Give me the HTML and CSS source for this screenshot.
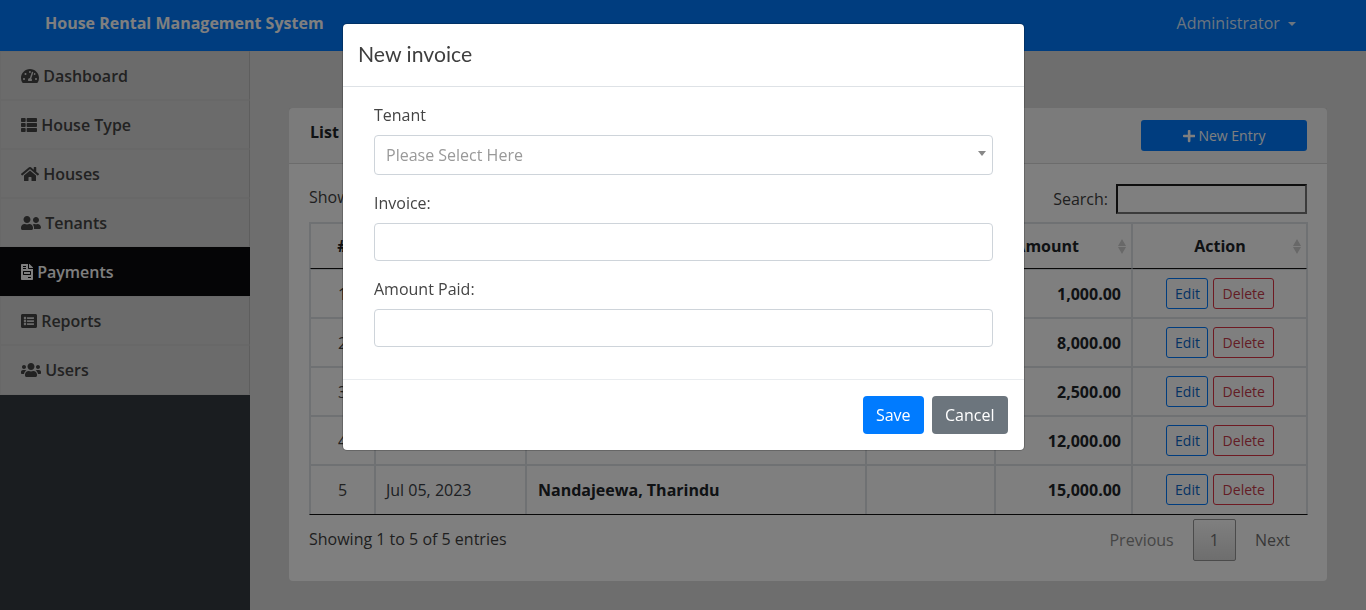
FILE: index.html
```html
<!DOCTYPE html>
<html lang="en">
<head>
<meta charset="utf-8">
<title>House Rental Management System</title>
<link rel="stylesheet" href="styles.css">
</head>
<body>
<div class="app">
  <header class="topbar">
    <span class="brand">House Rental Management System</span>
    <span class="account">Administrator <i class="caret"></i></span>
  </header>
  <div class="shell">
    <nav class="sidebar">
      <a class="nav-item"><svg class="ico" viewBox="0 0 576 512"><path d="M288 32C128.94 32 0 160.94 0 320c0 52.8 14.25 102.26 39.06 144.8 5.61 9.62 16.3 15.2 27.44 15.2h443c11.14 0 21.83-5.58 27.44-15.2C561.75 422.26 576 372.8 576 320c0-159.06-128.94-288-288-288zm0 64c14.71 0 26.58 10.13 30.32 23.65-1.11 2.26-2.64 4.23-3.45 6.67l-9.22 27.67c-5.13 3.49-10.97 6.01-17.64 6.01-17.67 0-32-14.33-32-32S270.33 96 288 96zM96 384c-17.67 0-32-14.33-32-32s14.33-32 32-32 32 14.33 32 32-14.33 32-32 32zm48-160c-17.67 0-32-14.33-32-32s14.33-32 32-32 32 14.33 32 32-14.33 32-32 32zm246.77-72.41l-61.33 184C343.13 347.33 352 364.54 352 384c0 11.72-3.38 22.55-8.88 32H232.88c-5.5-9.45-8.88-20.28-8.88-32 0-33.94 26.5-61.43 59.9-63.59l61.34-184.01c4.17-12.56 17.73-19.45 30.36-15.17 12.57 4.19 19.35 17.79 15.17 30.36zm14.66 57.2l15.52-46.55c3.47-1.29 7.13-2.23 11.05-2.23 17.67 0 32 14.33 32 32s-14.33 32-32 32c-11.38-.01-20.89-6.28-26.57-15.22zM480 384c-17.67 0-32-14.33-32-32s14.33-32 32-32 32 14.33 32 32-14.33 32-32 32z"/></svg> Dashboard</a>
      <a class="nav-item"><svg class="ico" viewBox="0 0 512 512"><path d="M149.333 216v80c0 13.255-10.745 24-24 24H24c-13.255 0-24-10.745-24-24v-80c0-13.255 10.745-24 24-24h101.333c13.255 0 24 10.745 24 24zM0 376v80c0 13.255 10.745 24 24 24h101.333c13.255 0 24-10.745 24-24v-80c0-13.255-10.745-24-24-24H24c-13.255 0-24 10.745-24 24zM125.333 32H24C10.745 32 0 42.745 0 56v80c0 13.255 10.745 24 24 24h101.333c13.255 0 24-10.745 24-24V56c0-13.255-10.745-24-24-24zm80 448H488c13.255 0 24-10.745 24-24v-80c0-13.255-10.745-24-24-24H205.333c-13.255 0-24 10.745-24 24v80c0 13.255 10.745 24 24 24zm-24-424v80c0 13.255 10.745 24 24 24H488c13.255 0 24-10.745 24-24V56c0-13.255-10.745-24-24-24H205.333c-13.255 0-24 10.745-24 24zm24 264H488c13.255 0 24-10.745 24-24v-80c0-13.255-10.745-24-24-24H205.333c-13.255 0-24 10.745-24 24v80c0 13.255 10.745 24 24 24z"/></svg> House Type</a>
      <a class="nav-item"><svg class="ico" viewBox="0 0 576 512"><path d="M280.37 148.26L96 300.11V464a16 16 0 0 0 16 16l112.06-.29a16 16 0 0 0 15.92-16V368a16 16 0 0 1 16-16h64a16 16 0 0 1 16 16v95.64a16 16 0 0 0 16 16.05L464 480a16 16 0 0 0 16-16V300L295.67 148.26a12.19 12.19 0 0 0-15.3 0zM571.6 251.47L488 182.56V44.05a12 12 0 0 0-12-12h-56a12 12 0 0 0-12 12v72.61L318.47 43a48 48 0 0 0-61 0L4.34 251.47a12 12 0 0 0-1.6 16.9l25.5 31A12 12 0 0 0 45.15 301l235.22-193.74a12.19 12.19 0 0 1 15.3 0L530.9 301a12 12 0 0 0 16.9-1.6l25.5-31a12 12 0 0 0-1.7-16.93z"/></svg> Houses</a>
      <a class="nav-item"><svg class="ico" viewBox="0 0 640 512"><path d="M192 256c61.9 0 112-50.1 112-112S253.9 32 192 32 80 82.1 80 144s50.1 112 112 112zm76.8 32h-8.3c-20.8 10-43.9 16-68.5 16s-47.6-6-68.5-16h-8.3C51.6 288 0 339.6 0 403.2V432c0 26.5 21.5 48 48 48h288c26.5 0 48-21.5 48-48v-28.8c0-63.6-51.6-115.2-115.2-115.2zM480 256c53 0 96-43 96-96s-43-96-96-96-96 43-96 96 43 96 96 96zm48 32h-3.8c-13.9 4.8-28.6 8-44.2 8s-30.3-3.2-44.2-8H432c-20.4 0-39.2 5.9-55.7 15.4 24.4 26.3 39.7 61.2 39.7 99.8v38.4c0 2.2-.5 4.3-.6 6.4H592c26.5 0 48-21.5 48-48 0-61.9-50.1-112-112-112z"/></svg> Tenants</a>
      <a class="nav-item active"><svg class="ico" viewBox="0 0 384 512"><path d="M288 256H96v64h192v-64zm89-151L279.1 7c-4.5-4.5-10.6-7-17-7H256v128h128v-6.1c0-6.3-2.5-12.4-7-16.9zm-153 31V0H24C10.7 0 0 10.7 0 24v464c0 13.3 10.7 24 24 24h336c13.3 0 24-10.7 24-24V160H248c-13.2 0-24-10.8-24-24zM64 72c0-4.42 3.58-8 8-8h80c4.42 0 8 3.58 8 8v16c0 4.42-3.58 8-8 8H72c-4.42 0-8-3.58-8-8V72zm0 64c0-4.42 3.58-8 8-8h80c4.42 0 8 3.58 8 8v16c0 4.42-3.58 8-8 8H72c-4.42 0-8-3.58-8-8v-16zm256 304c0 4.42-3.58 8-8 8h-80c-4.42 0-8-3.58-8-8v-16c0-4.42 3.58-8 8-8h80c4.42 0 8 3.58 8 8v16zm0-200v96c0 8.84-7.16 16-16 16H80c-8.84 0-16-7.16-16-16v-96c0-8.84 7.16-16 16-16h224c8.84 0 16 7.16 16 16z"/></svg> Payments</a>
      <a class="nav-item"><svg class="ico" viewBox="0 0 512 512"><path d="M464 480H48c-26.51 0-48-21.49-48-48V80c0-26.51 21.49-48 48-48h416c26.51 0 48 21.49 48 48v352c0 26.51-21.49 48-48 48zM128 120c-22.091 0-40 17.909-40 40s17.909 40 40 40 40-17.909 40-40-17.909-40-40-40zm0 96c-22.091 0-40 17.909-40 40s17.909 40 40 40 40-17.909 40-40-17.909-40-40-40zm0 96c-22.091 0-40 17.909-40 40s17.909 40 40 40 40-17.909 40-40-17.909-40-40-40zm288-136v-32c0-6.627-5.373-12-12-12H204c-6.627 0-12 5.373-12 12v32c0 6.627 5.373 12 12 12h200c6.627 0 12-5.373 12-12zm0 96v-32c0-6.627-5.373-12-12-12H204c-6.627 0-12 5.373-12 12v32c0 6.627 5.373 12 12 12h200c6.627 0 12-5.373 12-12zm0 96v-32c0-6.627-5.373-12-12-12H204c-6.627 0-12 5.373-12 12v32c0 6.627 5.373 12 12 12h200c6.627 0 12-5.373 12-12z"/></svg> Reports</a>
      <a class="nav-item"><svg class="ico" viewBox="0 0 640 512"><path d="M96 224c35.3 0 64-28.7 64-64s-28.7-64-64-64-64 28.7-64 64 28.7 64 64 64zm448 0c35.3 0 64-28.7 64-64s-28.7-64-64-64-64 28.7-64 64 28.7 64 64 64zm32 32h-64c-17.6 0-33.5 7.1-45.1 18.6 40.3 22.1 68.9 62 75.1 109.4h66c17.7 0 32-14.3 32-32v-32c0-35.3-28.7-64-64-64zm-256 0c61.9 0 112-50.1 112-112S381.9 32 320 32 208 82.1 208 144s50.1 112 112 112zm76.8 32h-8.3c-20.8 10-43.9 16-68.5 16s-47.6-6-68.5-16h-8.3C179.6 288 128 339.6 128 403.2V432c0 26.5 21.5 48 48 48h288c26.5 0 48-21.5 48-48v-28.8c0-63.6-51.6-115.2-115.2-115.2zm-223.7-13.4C161.5 263.1 145.6 256 128 256H64c-35.3 0-64 28.7-64 64v32c0 17.7 14.3 32 32 32h65.9c6.3-47.4 34.9-87.3 75.2-109.4z"/></svg> Users</a>
    </nav>
    <main class="content">
      <section class="card">
        <div class="card-header">
          <b class="card-title">List of Payments</b>
          <button class="btn-new"><svg class="ico-plus" viewBox="0 0 448 512"><path d="M416 208H272V64c0-17.67-14.33-32-32-32h-32c-17.67 0-32 14.33-32 32v144H32c-17.67 0-32 14.33-32 32v32c0 17.67 14.33 32 32 32h144v144c0 17.67 14.33 32 32 32h32c17.67 0 32-14.33 32-32V304h144c17.67 0 32-14.33 32-32v-32c0-17.67-14.33-32-32-32z"/></svg> New Entry</button>
        </div>
        <div class="card-body">
          <div class="table-tools">
            <span class="show">Show 10 entries</span>
            <label class="search">Search: <input class="search-input" type="text"></label>
          </div>
          <table class="data">
            <colgroup>
              <col class="c-num"><col class="c-date"><col class="c-name"><col class="c-inv"><col class="c-amt"><col class="c-act">
            </colgroup>
            <thead>
              <tr>
                <th>#</th><th class="sort">Date</th><th class="sort">Tenant</th><th class="sort">Invoice</th><th class="sort th-amount">Amount</th><th class="sort th-action">Action</th>
              </tr>
            </thead>
            <tbody>
              <tr><td class="num">1</td><td class="date"></td><td></td><td></td><td class="amt">1,000.00</td><td class="act"><button class="b-edit">Edit</button> <button class="b-del">Delete</button></td></tr>
              <tr><td class="num">2</td><td class="date"></td><td></td><td></td><td class="amt">8,000.00</td><td class="act"><button class="b-edit">Edit</button> <button class="b-del">Delete</button></td></tr>
              <tr><td class="num">3</td><td class="date"></td><td></td><td></td><td class="amt">2,500.00</td><td class="act"><button class="b-edit">Edit</button> <button class="b-del">Delete</button></td></tr>
              <tr><td class="num">4</td><td class="date"></td><td></td><td></td><td class="amt">12,000.00</td><td class="act"><button class="b-edit">Edit</button> <button class="b-del">Delete</button></td></tr>
              <tr><td class="num">5</td><td class="date">Jul 05, 2023</td><td class="name">Nandajeewa, Tharindu</td><td></td><td class="amt">15,000.00</td><td class="act"><button class="b-edit">Edit</button> <button class="b-del">Delete</button></td></tr>
            </tbody>
          </table>
          <div class="table-foot">
            <span class="info">Showing 1 to 5 of 5 entries</span>
            <div class="pager">
              <span class="page off">Previous</span>
              <span class="page current">1</span>
              <span class="page">Next</span>
            </div>
          </div>
        </div>
      </section>
    </main>
  </div>
</div>
<div class="backdrop">
  <div class="modal">
    <div class="modal-header"><h5 class="modal-title">New invoice</h5></div>
    <div class="modal-body">
      <div class="field">
        <label class="field-label">Tenant</label>
        <div class="select"><span class="placeholder">Please Select Here</span><i class="select-arrow"></i></div>
      </div>
      <div class="field">
        <label class="field-label">Invoice:</label>
        <input class="control" type="text">
      </div>
      <div class="field">
        <label class="field-label">Amount Paid:</label>
        <input class="control" type="text">
      </div>
    </div>
    <div class="modal-footer">
      <button class="btn btn-primary">Save</button>
      <button class="btn btn-secondary">Cancel</button>
    </div>
  </div>
</div>
</body>
</html>
```
FILE: styles.css
```css
* { box-sizing: border-box; }
html, body { height: 100%; }
body {
  margin: 0;
  overflow: hidden;
  font-family: "Open Sans", "Liberation Sans", sans-serif;
  font-size: 16px;
  line-height: 24px;
  color: #212529;
  background: #dcdcdc;
}
button, input { font-family: inherit; }

.app { height: 100%; display: flex; flex-direction: column; }

.topbar {
  height: 51px;
  flex: none;
  background: #007bff;
  color: #fff;
  display: flex;
  align-items: center;
  justify-content: space-between;
  padding: 0 70px 0 45px;
}
.brand { font-weight: 700; position: relative; top: -3px; }
.account { color: rgba(255,255,255,.85); position: relative; top: -3px; }
.caret {
  display: inline-block;
  margin-left: 4px;
  vertical-align: 3px;
  border-top: 4.5px solid;
  border-left: 4.5px solid transparent;
  border-right: 4.5px solid transparent;
}

.shell { flex: 1; display: flex; min-height: 0; }

.sidebar { width: 250px; flex: none; background: #343a40; }
.nav-item {
  display: block;
  height: 49px;
  padding: 12px 20px;
  background: #d6d6d6;
  border: 1px solid #d0d0d0;
  border-right-color: #bdbdbd;
  font-weight: 600;
  color: #444;
  white-space: nowrap;
}
.nav-item:last-child { height: 50px; }
.nav-item.active { background: #0a0b0d; border-color: #0a0b0d; color: #fff; }
.ico { height: 16px; width: auto; fill: currentColor; vertical-align: -2px; }

.content { flex: 1; padding: 57px 39px 0; min-width: 0; }

.card { background: #fff; border-radius: 4px; }
.card-header {
  height: 56px;
  display: flex;
  align-items: center;
  justify-content: space-between;
  padding: 0 20px 0 21px;
  background: rgba(0,0,0,.03);
  border-bottom: 1px solid rgba(0,0,0,.125);
}
.card-title { font-weight: 700; position: relative; top: -4px; }
.btn-new {
  width: 166px;
  height: 31px;
  padding: 0;
  border: 0;
  border-radius: 3px;
  background: #007bff;
  color: #fff;
  font-size: 14px;
}
.ico-plus { height: 14px; width: auto; fill: currentColor; vertical-align: -2px; }

.card-body { padding: 20px 20px 20px; color: #3f3f3f; }

.table-tools { height: 30px; display: flex; justify-content: space-between; align-items: center; margin-bottom: 8px; }
.show { position: relative; top: -2px; }
.search { display: flex; align-items: center; gap: 8px; }
.search-input {
  width: 191px;
  height: 30px;
  background: transparent;
  border: 2px solid;
  border-color: #1c1c1c #767676 #767676 #1c1c1c;
}

.data {
  width: 999px;
  table-layout: fixed;
  border-collapse: separate;
  border-spacing: 0;
  border: 1px solid #dee2e6;
  border-bottom: 1px solid #111;
  color: #212529;
}
.c-num { width: 65px; }
.c-date { width: 151px; }
.c-name { width: 340px; }
.c-inv { width: 129px; }
.c-amt { width: 137px; }
.c-act { width: 175px; }

.data th {
  height: 46px;
  padding: 0 12px;
  border: 1px solid #dee2e6;
  border-bottom: 1px solid #111;
  font-weight: 700;
  text-align: center;
  white-space: nowrap;
  position: relative;
}
.sort::after {
  content: "";
  position: absolute;
  right: 5px;
  top: 15px;
  width: 8px;
  height: 7px;
  background: #d0d0d0;
  clip-path: polygon(50% 0, 100% 100%, 0 100%);
}
.sort::before {
  content: "";
  position: absolute;
  right: 5px;
  top: 23px;
  width: 8px;
  height: 7px;
  background: #d0d0d0;
  clip-path: polygon(0 0, 100% 0, 50% 100%);
}
.data th.th-amount { text-align: right; padding-right: 52px; }
.data th.th-action { padding-left: 13px; }

.data td {
  height: 49px;
  padding: 8px 10px;
  border: 1px solid #dee2e6;
  vertical-align: middle;
}
.data tbody tr:last-child td { border-bottom: 0; padding-bottom: 9px; }
.num { text-align: center; color: #444; }
.data td.name { padding-left: 11px; font-weight: 700; }
.date { color: #3a3f46; }
.amt { font-weight: 700; text-align: right; }
.data td.act { padding-right: 9px; text-align: center; white-space: nowrap; font-size: 14px; }

.b-edit, .b-del {
  height: 31px;
  background: transparent;
  border: 1px solid;
  border-radius: 3px;
  font-size: 14px;
  margin: 0;
}
.b-edit { padding: 0 7.5px 0 8.5px; color: #0a66c8; border-color: #007bff; }
.b-del { padding: 0 8.5px; margin-left: 1px; color: #c63a4a; border-color: #dc3545; }

.table-foot { display: flex; justify-content: space-between; align-items: flex-start; }
.info { padding-top: 12px; }
.pager { display: flex; margin-top: 4px; }
.page { padding: 8px 16px; margin-left: 2px; border: 1px solid transparent; color: #707070; border-radius: 2px; }
.page.off { color: #8c8c8c; }
.page.current { border-color: #979797; background: linear-gradient(#fff, #dcdcdc); }

.backdrop {
  position: fixed;
  inset: 0;
  background: rgba(0,0,0,.5);
  display: flex;
  justify-content: center;
  align-items: flex-start;
}
.modal {
  width: 683px;
  margin: 23px 0 0 1px;
  background: #fff;
  border: 1px solid rgba(0,0,0,.2);
  border-radius: 5px;
  background-clip: padding-box;
}
.modal-header { height: 63px; padding: 15px; border-bottom: 1px solid #dee2e6; }
.modal-title {
  margin: 0;
  font-family: Lato, "Open Sans", sans-serif;
  font-size: 21.2px;
  font-weight: 400;
  line-height: 30px;
  color: #3e3e3e;
}
.modal-body { padding: 16px 31px; }
.field { margin-bottom: 16px; }
.field-label { display: block; margin-bottom: 8px; color: #444; }
.select, .control {
  display: block;
  width: 100%;
  height: 38px;
  border: 1px solid #ced4da;
  border-radius: 4px;
  background: #fff;
}
.select { height: 40px; position: relative; padding: 7px 11px; }
.placeholder { color: #999; }
.select-arrow {
  position: absolute;
  right: 6px;
  top: 15px;
  border-top: 5px solid #888;
  border-left: 4px solid transparent;
  border-right: 4px solid transparent;
}
.modal-footer {
  display: flex;
  justify-content: flex-end;
  gap: 8px;
  padding: 16px;
  border-top: 1px solid #e9ecef;
}
.btn {
  height: 38px;
  padding: 0 13px;
  border: 0;
  border-radius: 4px;
  color: #fff;
  font-size: 16px;
  font-weight: 500;
}
.btn-primary { background: #007bff; }
.btn-secondary { padding: 0 13.5px; background: #6c757d; }
```
